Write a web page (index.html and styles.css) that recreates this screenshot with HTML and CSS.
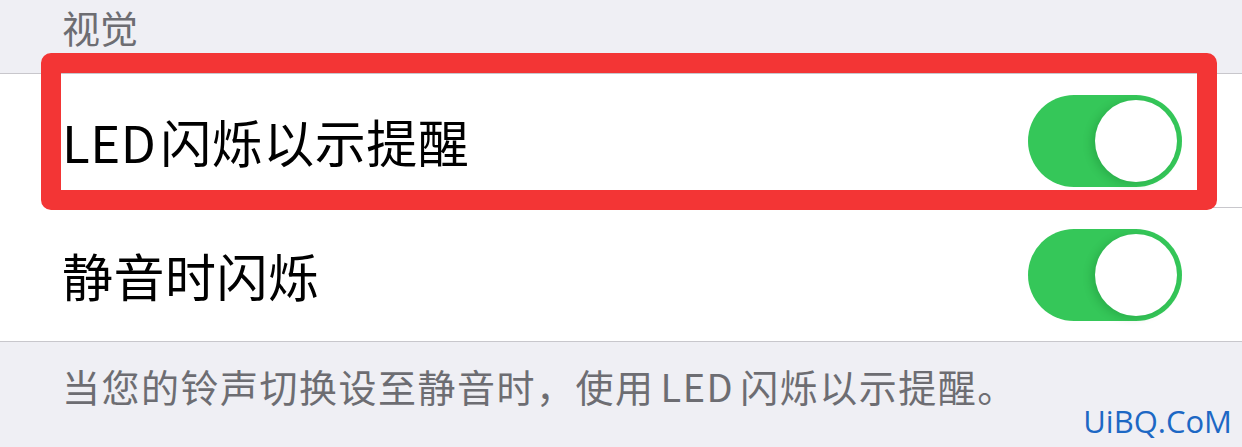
FILE: index.html
```html
<!DOCTYPE html>
<html lang="zh-CN">
<head>
  <meta charset="UTF-8" />
  <meta name="viewport" content="width=device-width, initial-scale=1.0" />
  <title>视觉</title>
  <link rel="stylesheet" href="styles.css">
</head>
<body>
  <div class="screen">
    <!-- section title -->
    <div class="group-title">视觉</div>

    <div class="group">
      <div class="row">
        <span class="label">LED 闪烁以示提醒</span>
        <span class="switch on"><span class="knob"></span></span>
      </div>
      <div class="row">
        <span class="label">静音时闪烁</span>
        <span class="switch on"><span class="knob"></span></span>
      </div>
    </div>

    <div class="group-footer">当您的铃声切换设至静音时，使用 LED 闪烁以示提醒。</div>

    <!-- annotation drawn over the screenshot -->
    <div class="highlight"></div>
    <div class="watermark">UiBQ.CoM</div>
  </div>
</body>
</html>
```

FILE: styles.css
```css
html, body {
  margin: 0;
  padding: 0;
}
body {
  font-family: "Noto Sans CJK SC", "Noto Sans", sans-serif;
  background-color: #efeff4;
}
.screen {
  position: relative;
  width: 1242px;
  height: 447px;
  overflow: hidden;
}
.group-title {
  height: 71px;
  padding: 2px 0 0 62px;
  font-size: 38px;
  line-height: 50px;
  color: #6d6d72;
}
.group {
  background: #fff;
  border-top: 1px solid #c8c7cc;
  border-bottom: 1px solid #c8c7cc;
}
.row {
  display: flex;
  align-items: center;
  justify-content: space-between;
  height: 133px;
  margin-left: 62px;
  padding-right: 60px;
}
.row + .row {
  border-top: 1px solid #c8c7cc;
}
.label {
  font-size: 51px;
  letter-spacing: 0.5px;
  word-spacing: -8px;
  color: #000;
}
.switch {
  position: relative;
  display: block;
  width: 154px;
  height: 92px;
  border-radius: 46px;
  background: #e5e5ea;
}
.switch.on {
  background: #35c759;
}
.knob {
  position: absolute;
  top: 5px;
  right: 5px;
  width: 82px;
  height: 82px;
  border-radius: 50%;
  background: #fff;
  box-shadow: -4px 2px 9px rgba(0, 80, 20, 0.2);
}
.group-footer {
  padding: 19px 0 0 62px;
  font-size: 38px;
  letter-spacing: 1.5px;
  word-spacing: -4px;
  line-height: 50px;
  color: #6d6d72;
}
.highlight {
  position: absolute;
  left: 41px;
  top: 53px;
  width: 1176px;
  height: 157px;
  box-sizing: border-box;
  border: 20px solid #f33535;
  border-radius: 10px;
}
.watermark {
  position: absolute;
  right: 10px;
  top: 403px;
  font-family: "Open Sans", sans-serif;
  font-size: 31px;
  line-height: 36px;
  color: #1d68c4;
}
```
